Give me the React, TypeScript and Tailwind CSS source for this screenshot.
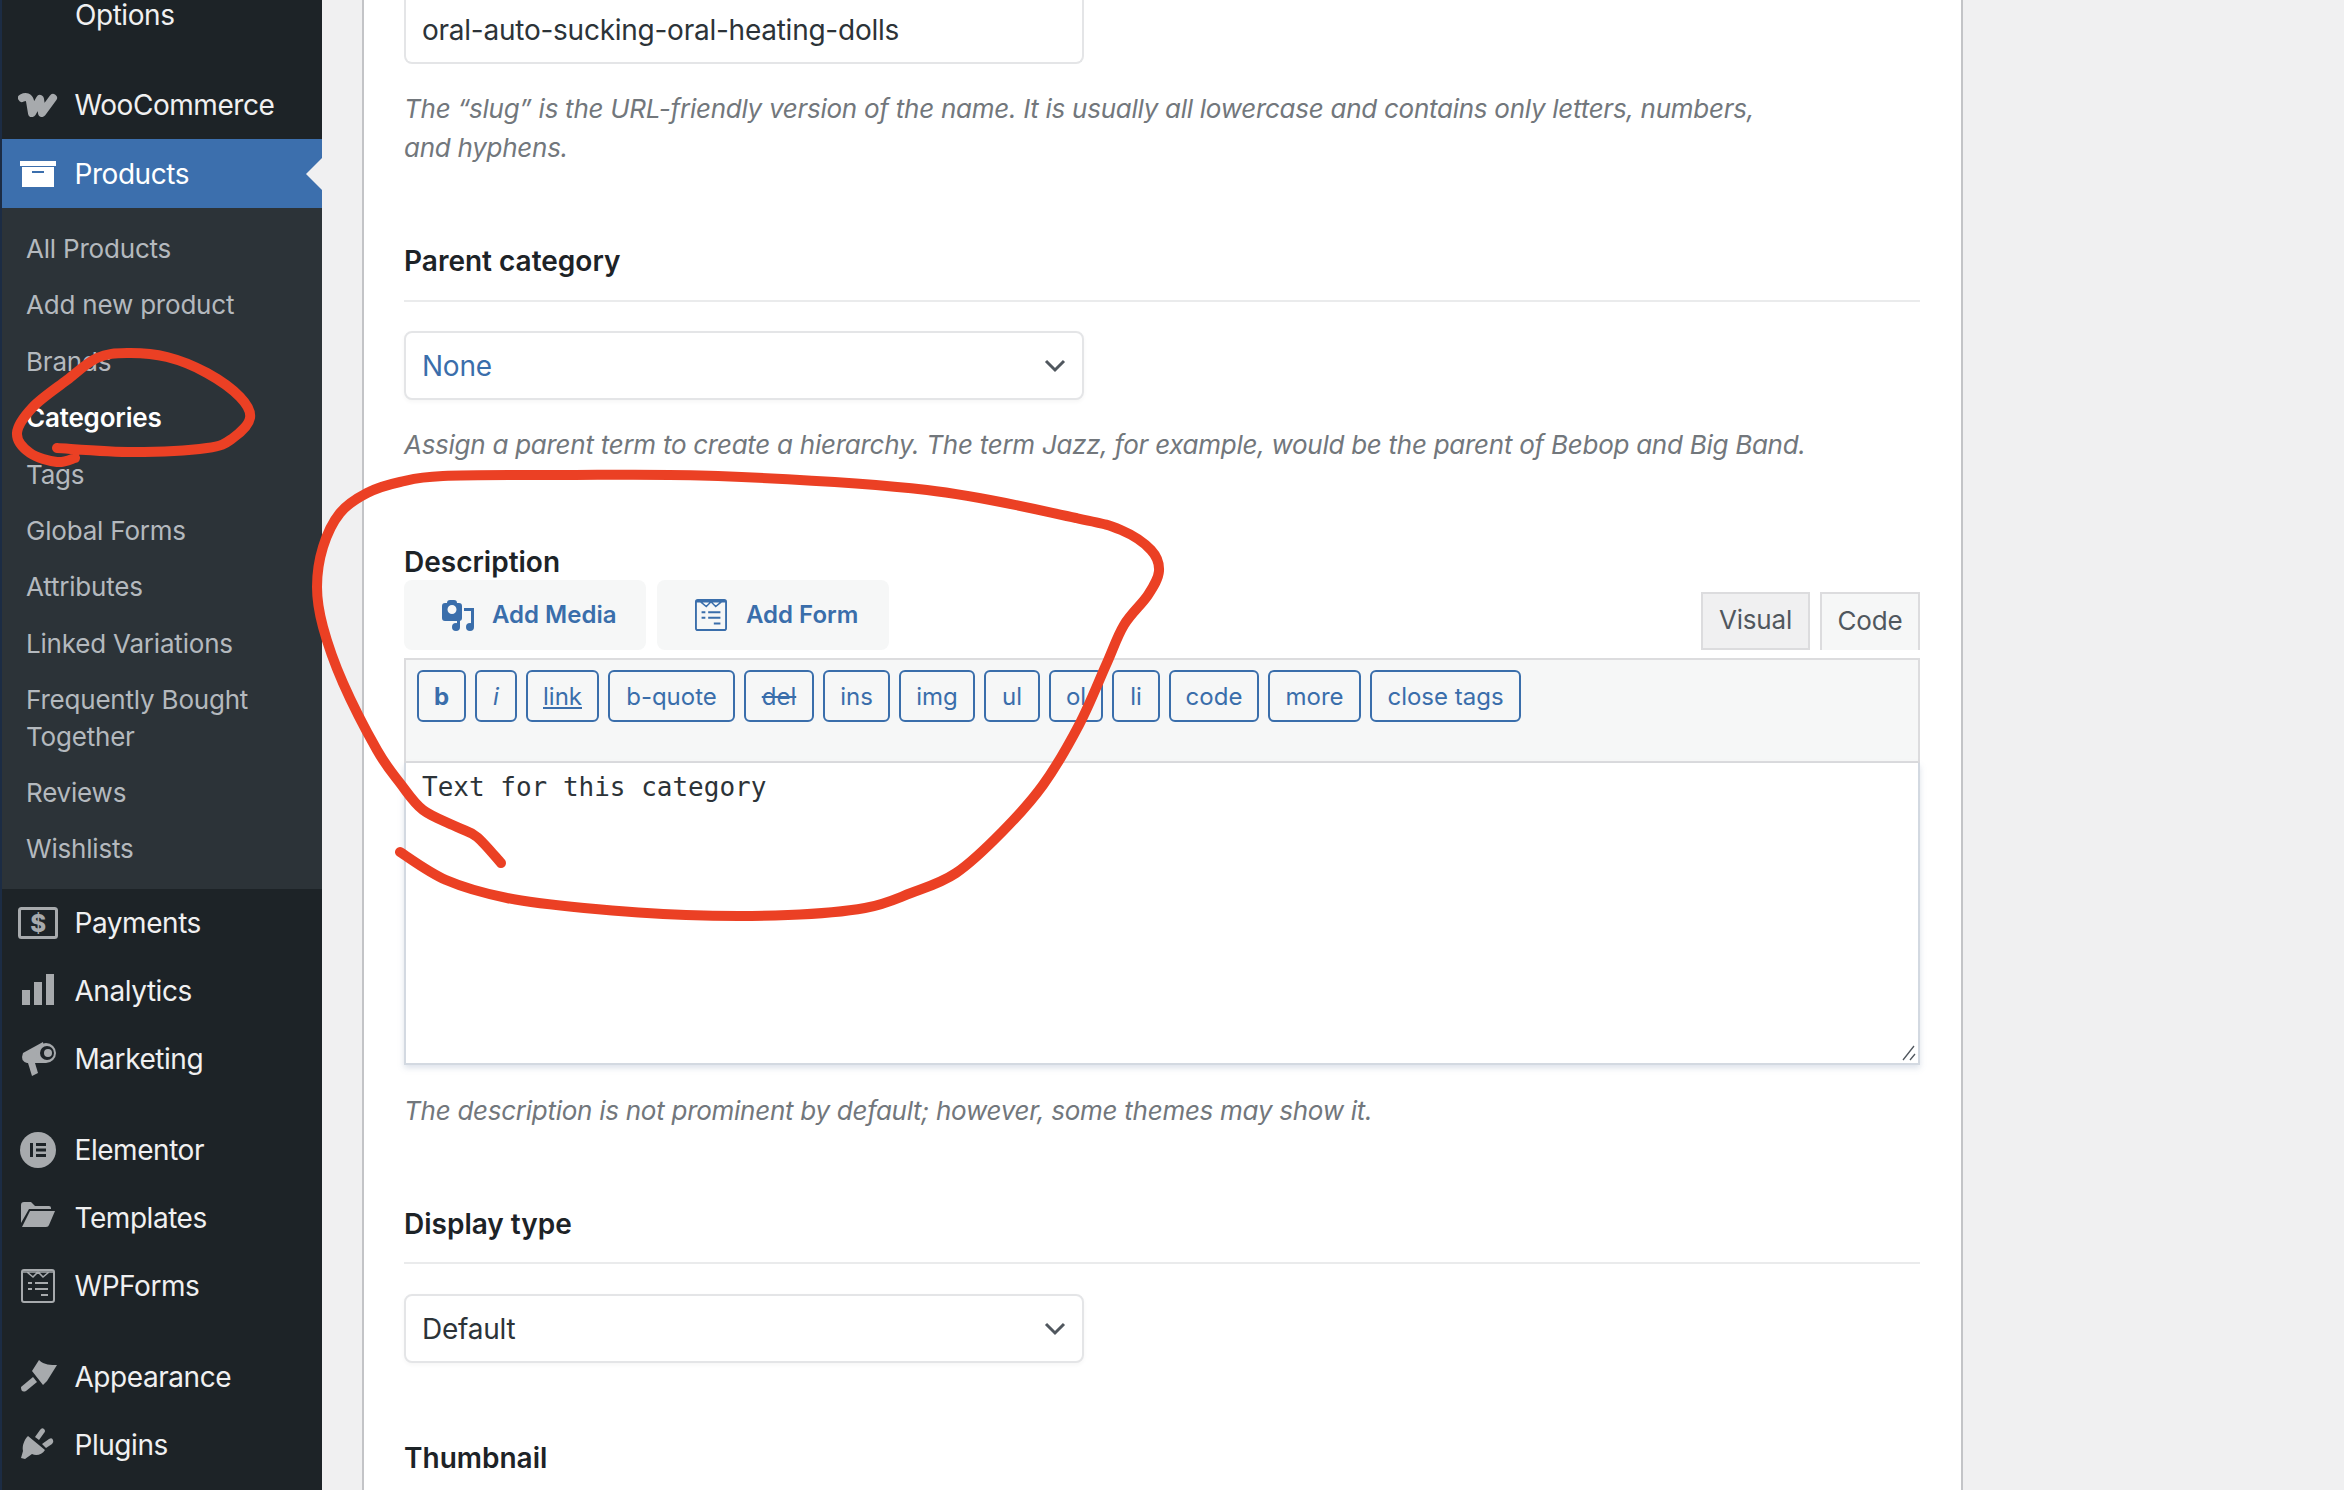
import React from "react";

// smooth line through the hand-drawn points (catmull-rom to bezier)
function smooth(pts: number[][]) {
  let d = `M${pts[0][0]} ${pts[0][1]}`;
  for (let i = 0; i < pts.length - 1; i++) {
    const p0 = pts[i - 1] || pts[i];
    const p1 = pts[i];
    const p2 = pts[i + 1];
    const p3 = pts[i + 2] || p2;
    const c1x = p1[0] + (p2[0] - p0[0]) / 6;
    const c1y = p1[1] + (p2[1] - p0[1]) / 6;
    const c2x = p2[0] - (p3[0] - p1[0]) / 6;
    const c2y = p2[1] - (p3[1] - p1[1]) / 6;
    d += ` C${c1x.toFixed(1)} ${c1y.toFixed(1)} ${c2x.toFixed(1)} ${c2y.toFixed(1)} ${p2[0]} ${p2[1]}`;
  }
  return d;
}

const bigLoop = [
  [501, 863], [477, 837], [457, 827], [423, 810], [400, 783], [377, 750], [343, 683], [323, 627], [317, 587],
  [323, 547], [340, 513], [367, 493], [400, 482], [443, 476], [560, 475], [718, 476], [927, 490], [1076, 518],
  [1121, 530], [1151, 550], [1159, 571], [1148, 595], [1124, 625], [1106, 665], [1079, 725], [1043, 785], [1002, 832],
  [956, 873], [911, 893], [865, 908], [788, 915], [686, 915], [584, 908], [507, 898], [446, 880], [400, 852],
];

const smallLoop = [
  [57, 448], [133, 452], [207, 448], [233, 438], [250, 418], [240, 397], [207, 373], [167, 357], [127, 353],
  [97, 358], [67, 380], [33, 407], [17, 433], [30, 453], [57, 462], [75, 458],
];

function WooIcon() {
  return (
    <svg width="40" height="40" viewBox="0 0 40 40">
      <path d="M4 13 C8 11 11 12 12 16 L14 28 L22 14 L24 28 L35 13" fill="none" stroke="#a7aaad" strokeWidth="8" strokeLinejoin="round" strokeLinecap="round" />
    </svg>
  );
}

function ArchiveIcon() {
  return (
    <svg width="40" height="40" viewBox="0 0 40 40">
      <rect x="2" y="7" width="36" height="5" fill="#fff" />
      <path fillRule="evenodd" d="M4 13H36V33H4ZM14 17V19H26V17Z" fill="#fff" />
    </svg>
  );
}

function PaymentsIcon() {
  return (
    <svg width="40" height="40" viewBox="0 0 40 40">
      <rect x="1.5" y="5.5" width="37" height="29" rx="2" fill="none" stroke="#a7aaad" strokeWidth="3" />
      <text x="20" y="29" textAnchor="middle" fontSize="24" fontWeight="800" fontFamily="Inter, sans-serif" fill="#a7aaad">$</text>
    </svg>
  );
}

function AnalyticsIcon() {
  return (
    <svg width="40" height="40" viewBox="0 0 40 40" fill="#a7aaad">
      <rect x="4" y="19" width="8" height="15" />
      <rect x="16" y="11" width="8" height="23" />
      <rect x="28" y="3" width="8" height="31" />
    </svg>
  );
}

function MarketingIcon() {
  return (
    <svg width="40" height="40" viewBox="0 0 40 40" fill="#a7aaad">
      <path d="M5 14 L25 3 L28 24 H9 Q2 22 5 14Z" />
      <path d="M10 24 H17 L20 34 L14 37Z" />
      <circle cx="28" cy="14" r="10" />
      <circle cx="29" cy="14" r="7" fill="#1d2327" />
      <circle cx="30" cy="14" r="4" />
    </svg>
  );
}

function ElementorIcon() {
  return (
    <svg width="40" height="40" viewBox="0 0 40 40">
      <circle cx="20" cy="20" r="18" fill="#a7aaad" />
      <rect x="12" y="13" width="3" height="14" fill="#1d2327" />
      <rect x="18" y="13" width="10" height="3" fill="#1d2327" />
      <rect x="18" y="18.5" width="10" height="3" fill="#1d2327" />
      <rect x="18" y="24" width="10" height="3" fill="#1d2327" />
    </svg>
  );
}

function FolderIcon() {
  return (
    <svg width="40" height="40" viewBox="0 0 40 40" fill="#a7aaad">
      <path d="M3 7 Q3 4 6 4 H13 L17 8 H31 Q33 8 33 10 V11 H11 L3 25Z" />
      <path d="M12 13 H37 L31 27 Q30.500 29 28 29 H4Z" />
    </svg>
  );
}

function FormsIcon({ color, size }: { color: string; size: number }) {
  return (
    <svg width={size} height={size} viewBox="0 0 34 34" fill="none" stroke={color}>
      <rect x="1" y="1" width="32" height="32" rx="2" strokeWidth="2" />
      <path d="M1 3 H33 M6 3 L12 8 L17 3 L22 8 L28 3" strokeWidth="1.6" />
      <path d="M7 14 H11 M14 14 H27 M7 20 H11 M14 20 H27 M20 26 H27" strokeWidth="2.2" />
    </svg>
  );
}

function BrushIcon() {
  return (
    <svg width="40" height="40" viewBox="0 0 40 40" fill="#a7aaad">
      <path d="M3 30 L15 20 L19 25 L8 34 Q3 36 3 30Z" />
      <path d="M14 14 L21 3 C26 8 33 8 39 8 L29 24 L25 28Z" />
    </svg>
  );
}

function PlugIcon() {
  return (
    <svg width="40" height="40" viewBox="0 0 40 40" fill="#a7aaad">
      <path d="M10 11 L27 25 C24 30 18 31 14 29 L7 34 L3 33 L5 26 C4 21 6 15 10 11Z" />
      <path d="M17 12 L22 5 Q24 2 26 4 Q28 6 26 8 L21 15Z" />
      <path d="M24 19 L31 14 Q34 12 35 15 Q36 17 34 19 L28 23Z" />
    </svg>
  );
}

const subItems = [
  "All Products",
  "Add new product",
  "Brands",
  "Categories",
  "Tags",
  "Global Forms",
  "Attributes",
  "Linked Variations",
  "Frequently Bought Together",
  "Reviews",
  "Wishlists",
];

function MenuRow({ icon, label }: { icon: React.ReactNode; label: string }) {
  return (
    <div className="flex items-center h-[68px] pl-[18px] gap-[16.500px] text-[28px] tracking-[-0.45px] text-[#f0f0f1]">
      <span className="w-[40px] h-[40px] shrink-0 flex items-center justify-center">{icon}</span>
      <span>{label}</span>
    </div>
  );
}

function Sidebar() {
  return (
    <aside className="w-[322px] shrink-0 h-full bg-[#1d2327] border-l-2 border-[#1c2c44]">
      <div className="h-[71px] pl-[73px] text-[28px] leading-[30px] tracking-[-0.45px] text-[#f0f0f1]">Options</div>
      <div className="h-[68px] flex items-center pl-[16px] gap-[16.500px] text-[28px] tracking-[-0.45px] text-[#f0f0f1]">
        <span className="w-[40px] h-[40px] shrink-0"><WooIcon /></span>
        <span>WooCommerce</span>
      </div>
      <div className="relative h-[69px] flex items-center pl-[16px] gap-[16.500px] bg-[#3c6fad] text-[28px] tracking-[-0.45px] text-white">
        <span className="w-[40px] h-[40px] shrink-0"><ArchiveIcon /></span>
        <span>Products</span>
        <span className="absolute right-0 top-[19px] border-y-[16px] border-r-[16px] border-y-transparent border-r-[#f0f0f1]" />
      </div>
      <ul className="bg-[#2c3338] pt-[13px] pb-[11px] text-[26px] leading-[36.4px] tracking-[-0.2px] text-[#b4b9be]">
        {subItems.map((s) => (
          <li key={s} className={s === "Categories" ? "py-[10px] pl-[24px] pr-[20px] text-white font-semibold" : "py-[10px] pl-[24px] pr-[20px]"}>
            {s}
          </li>
        ))}
      </ul>
      <div className="-ml-[2px]">
        <MenuRow icon={<PaymentsIcon />} label="Payments" />
        <MenuRow icon={<AnalyticsIcon />} label="Analytics" />
        <MenuRow icon={<MarketingIcon />} label="Marketing" />
        <div className="h-[23px]" />
        <MenuRow icon={<ElementorIcon />} label="Elementor" />
        <MenuRow icon={<FolderIcon />} label="Templates" />
        <MenuRow icon={<FormsIcon color="#a7aaad" size={34} />} label="WPForms" />
        <div className="h-[23px]" />
        <MenuRow icon={<BrushIcon />} label="Appearance" />
        <MenuRow icon={<PlugIcon />} label="Plugins" />
      </div>
    </aside>
  );
}

function SelectBox({ value, blue }: { value: string; blue?: boolean }) {
  return (
    <div className="w-[680px] h-[69px] flex items-center justify-between pl-[16px] pr-[15px] bg-white border-2 border-[#e4e5e7] rounded-[8px] shadow-[0_2px_4px_rgba(0,0,0,0.04)]">
      <span className={blue ? "text-[28px] tracking-[-0.25px] text-[#3a6eab]" : "text-[28px] tracking-[-0.25px] text-[#2c3338]"}>{value}</span>
      <svg width="24" height="16" viewBox="0 0 24 16" fill="none" stroke="#50575e" strokeWidth="3">
        <path d="M3 3 L12 12 L21 3" />
      </svg>
    </div>
  );
}

const tags = [
  { t: "b", c: "w-[49px] font-bold" },
  { t: "i", c: "w-[42px] italic" },
  { t: "link", c: "w-[73px] underline" },
  { t: "b-quote", c: "w-[127px]" },
  { t: "del", c: "w-[70px] line-through" },
  { t: "ins", c: "w-[67px]" },
  { t: "img", c: "w-[76px]" },
  { t: "ul", c: "w-[56px]" },
  { t: "ol", c: "w-[54px]" },
  { t: "li", c: "w-[48px]" },
  { t: "code", c: "w-[90px]" },
  { t: "more", c: "w-[93px]" },
  { t: "close tags", c: "w-[151px]" },
];

function CardBody() {
  return (
    <div className="pl-[40px] pr-[41px]">
      <div className="w-[680px] h-[64px] flex items-center pl-[16px] pb-[2px] bg-white border-2 border-t-0 border-[#e4e5e7] rounded-b-[8px] text-[28px] tracking-[-0.25px] text-[#2c3338]">
        oral-auto-sucking-oral-heating-dolls
      </div>
      <p className="mt-[25px] w-[1400px] text-[26px] leading-[39px] italic tracking-[-0.27px] text-[#72777c]">
        The “slug” is the URL-friendly version of the name. It is usually all lowercase and contains only letters, numbers, and hyphens.
      </p>

      <h3 className="mt-[74px] pb-[19px] border-b-2 border-[#eaebec] text-[28px] leading-[40px] font-semibold text-[#1d2327]">Parent category</h3>
      <div className="mt-[29px]"><SelectBox value="None" blue /></div>
      <p className="mt-[25px] text-[26px] leading-[39px] italic tracking-[-0.27px] text-[#72777c]">
        Assign a parent term to create a hierarchy. The term Jazz, for example, would be the parent of Bebop and Big Band.
      </p>

      <h3 className="mt-[80px] text-[28px] leading-[36px] font-semibold text-[#1d2327]">Description</h3>
      <div className="flex items-end justify-between h-[70px]">
        <div className="flex gap-[11px]">
          <div className="w-[242px] h-[70px] flex items-center pl-[38px] gap-[18px] bg-[#f6f7f7] rounded-[8px] text-[24px] font-semibold text-[#3a6eab]">
            <svg width="32" height="31" viewBox="0 0 32 31" fill="#3a6eab">
              <path fillRule="evenodd" d="M5 3 Q5 0 8 0 H12 Q15 0 15 3 H17 Q20 3 20 6 V18 Q20 21 17 21 H3 Q0 21 0 18 V6 Q0 3 3 3Z M10 5 A4.500 4.500 0 1 0 10 14 A4.500 4.500 0 1 0 10 5Z" />
              <circle cx="14" cy="27" r="4" />
              <circle cx="28" cy="27" r="4" />
              <path d="M22 8 H32 V27 H29 V11 H22Z M15 20 H18 V27 H15Z" />
            </svg>
            <span>Add Media</span>
          </div>
          <div className="w-[232px] h-[70px] flex items-center pl-[38px] gap-[19px] bg-[#f6f7f7] rounded-[8px] text-[24px] font-semibold text-[#3a6eab]">
            <FormsIcon color="#3a6eab" size={32} />
            <span>Add Form</span>
          </div>
        </div>
        <div className="flex gap-[10px] text-[26px] tracking-[-0.2px] text-[#50575e]">
          <div className="w-[109px] h-[58px] pb-[4px] flex items-center justify-center bg-[#f0f0f1] border-2 border-[#dcdcde]">Visual</div>
          <div className="w-[100px] h-[58px] pb-[4px] flex items-center justify-center bg-[#f6f7f7] border-2 border-b-0 border-[#dcdcde]">Code</div>
        </div>
      </div>

      <div className="mt-[8px] h-[105px] bg-[#f6f7f7] border-2 border-[#dcdcde] pt-[10px] pl-[11px] flex items-start gap-[9px]">
        {tags.map((b) => (
          <div key={b.t} className={`${b.c} h-[52px] pt-[1px] flex items-center justify-center rounded-[6px] border-2 border-[#3a6eab] text-[24px] text-[#3a6eab]`}>
            {b.t}
          </div>
        ))}
      </div>
      <div className="relative h-[302px] bg-white border-2 border-t-0 border-[#d3d9e1] pl-[16px] pt-[6px] shadow-[0_3px_6px_rgba(120,140,170,0.25)] font-['DejaVu_Sans_Mono',monospace] text-[26px] leading-[36px] text-[#2c3338]">
        Text for this category
        <svg className="absolute right-[2px] bottom-[2px]" width="14" height="16" viewBox="0 0 14 16" fill="none" stroke="#50575e" strokeWidth="1.300">
          <path d="M1 15 L12 1 M8 15 L13 9" />
        </svg>
      </div>
      <p className="mt-[26px] text-[26px] leading-[39px] italic tracking-[-0.27px] text-[#72777c]">
        The description is not prominent by default; however, some themes may show it.
      </p>

      <h3 className="mt-[74px] pb-[18px] border-b-2 border-[#eaebec] text-[28px] leading-[40px] font-semibold text-[#1d2327]">Display type</h3>
      <div className="mt-[30px]"><SelectBox value="Default" /></div>
      <h3 className="mt-[75px] text-[28px] leading-[40px] font-semibold text-[#1d2327]">Thumbnail</h3>
    </div>
  );
}

export default function App() {
  return (
    <div className="relative w-[2344px] h-[1490px] overflow-hidden flex bg-[#f0f0f1] font-['Inter',sans-serif]">
      <Sidebar />
      <main className="ml-[40px] w-[1601px] h-full bg-white border-x-2 border-[#c3c4c7]">
        <CardBody />
      </main>
      <svg className="absolute inset-0 pointer-events-none" width="2344" height="1490" viewBox="0 0 2344 1490" fill="none" stroke="#eb4024" strokeWidth="10" strokeLinecap="round" strokeLinejoin="round">
        <path d={smooth(bigLoop)} />
        <path d={smooth(smallLoop)} />
      </svg>
    </div>
  );
}
